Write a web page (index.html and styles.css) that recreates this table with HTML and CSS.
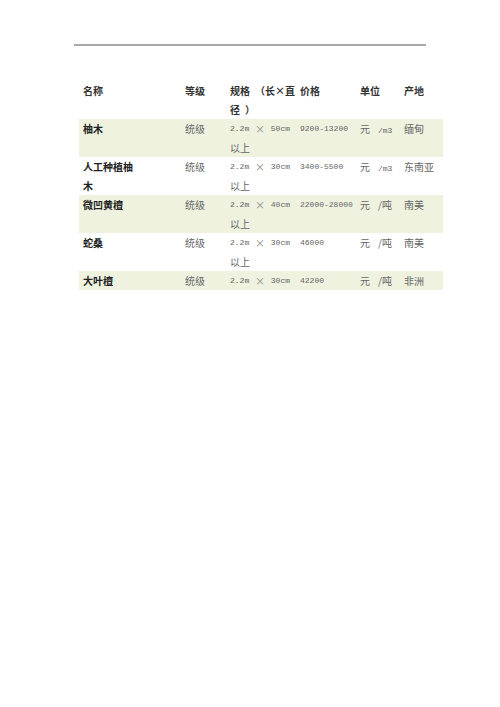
FILE: index.html
```html
<!DOCTYPE html>
<html>
<head>
<meta charset="utf-8">
<link rel="stylesheet" href="styles.css">
</head>
<body>
<div class="page">
  <div class="rule"></div>
  <table class="wood">
    <colgroup>
      <col class="c1"><col class="c2"><col class="c3"><col class="c4"><col class="c5"><col class="c6">
    </colgroup>
    <tr class="head">
      <td>名称</td>
      <td>等级</td>
      <td>规格<span class="gap">（</span>长×直<br>径<span class="gap">）</span></td>
      <td>价格</td>
      <td>单位</td>
      <td>产地</td>
    </tr>
    <tr class="alt">
      <td class="name">柚木</td>
      <td>统级</td>
      <td><div class="spec"><span>2.2m</span><span class="x">×</span><span>50cm</span></div>以上</td>
      <td class="num">9200-13200</td>
      <td><span class="unit">元</span><span class="num">/m3</span></td>
      <td>缅甸</td>
    </tr>
    <tr>
      <td class="name">人工种植柚<br>木</td>
      <td>统级</td>
      <td><div class="spec"><span>2.2m</span><span class="x">×</span><span>30cm</span></div>以上</td>
      <td class="num">3400-5500</td>
      <td><span class="unit">元</span><span class="num">/m3</span></td>
      <td>东南亚</td>
    </tr>
    <tr class="alt">
      <td class="name">微凹黄檀</td>
      <td>统级</td>
      <td><div class="spec"><span>2.2m</span><span class="x">×</span><span>40cm</span></div>以上</td>
      <td class="num">22000-28000</td>
      <td><span class="unit">元</span>/吨</td>
      <td>南美</td>
    </tr>
    <tr>
      <td class="name">蛇桑</td>
      <td>统级</td>
      <td><div class="spec"><span>2.2m</span><span class="x">×</span><span>30cm</span></div>以上</td>
      <td class="num">46000</td>
      <td><span class="unit">元</span>/吨</td>
      <td>南美</td>
    </tr>
    <tr class="alt">
      <td class="name">大叶檀</td>
      <td>统级</td>
      <td><div class="spec"><span>2.2m</span><span class="x">×</span><span>30cm</span></div></td>
      <td class="num">42200</td>
      <td><span class="unit">元</span>/吨</td>
      <td>非洲</td>
    </tr>
  </table>
</div>
</body>
</html>
```

FILE: styles.css
```css
html, body {
  margin: 0;
  padding: 0;
  background: #ffffff;
}
.page {
  width: 500px;
  height: 707px;
  padding-top: 44px;
  box-sizing: border-box;
  font-family: "Noto Sans CJK SC", "Liberation Serif", serif;
  font-size: 10px;
  color: #666666;
}
.rule {
  margin-left: 74px;
  width: 352px;
  height: 0;
  border-top: 2px solid #a8a8a8;
}
.wood {
  margin-top: 35px;
  margin-left: 79px;
  border-collapse: collapse;
  table-layout: fixed;
  width: 364px;
}
.c1 { width: 102px; }
.c2 { width: 45px; }
.c3 { width: 70px; }
.c4 { width: 60px; }
.c5 { width: 44px; }
.c6 { width: 43px; }
.wood td {
  padding: 0 4px;
  vertical-align: top;
  line-height: 19px;
  font-size: 10px;
  white-space: nowrap;
  overflow: hidden;
}
.wood tr.head td {
  font-weight: bold;
  color: #333333;
  overflow: visible;
}
.gap {
  margin-left: 5px;
}
.alt td {
  background: #eef2df;
}
.wood td.name {
  font-weight: bold;
  color: #222222;
}
.spec {
  display: flex;
  justify-content: space-between;
  width: 60px;
  font-family: "Liberation Mono", monospace;
  font-size: 8px;
}
.spec .x {
  font-family: "Noto Sans CJK SC", sans-serif;
  font-size: 10px;
  color: #888888;
}
.num {
  font-family: "Liberation Mono", monospace;
  font-size: 8px;
}
.wood td.num {
  font-size: 8px;
}
.unit {
  margin-right: 8px;
}
```
